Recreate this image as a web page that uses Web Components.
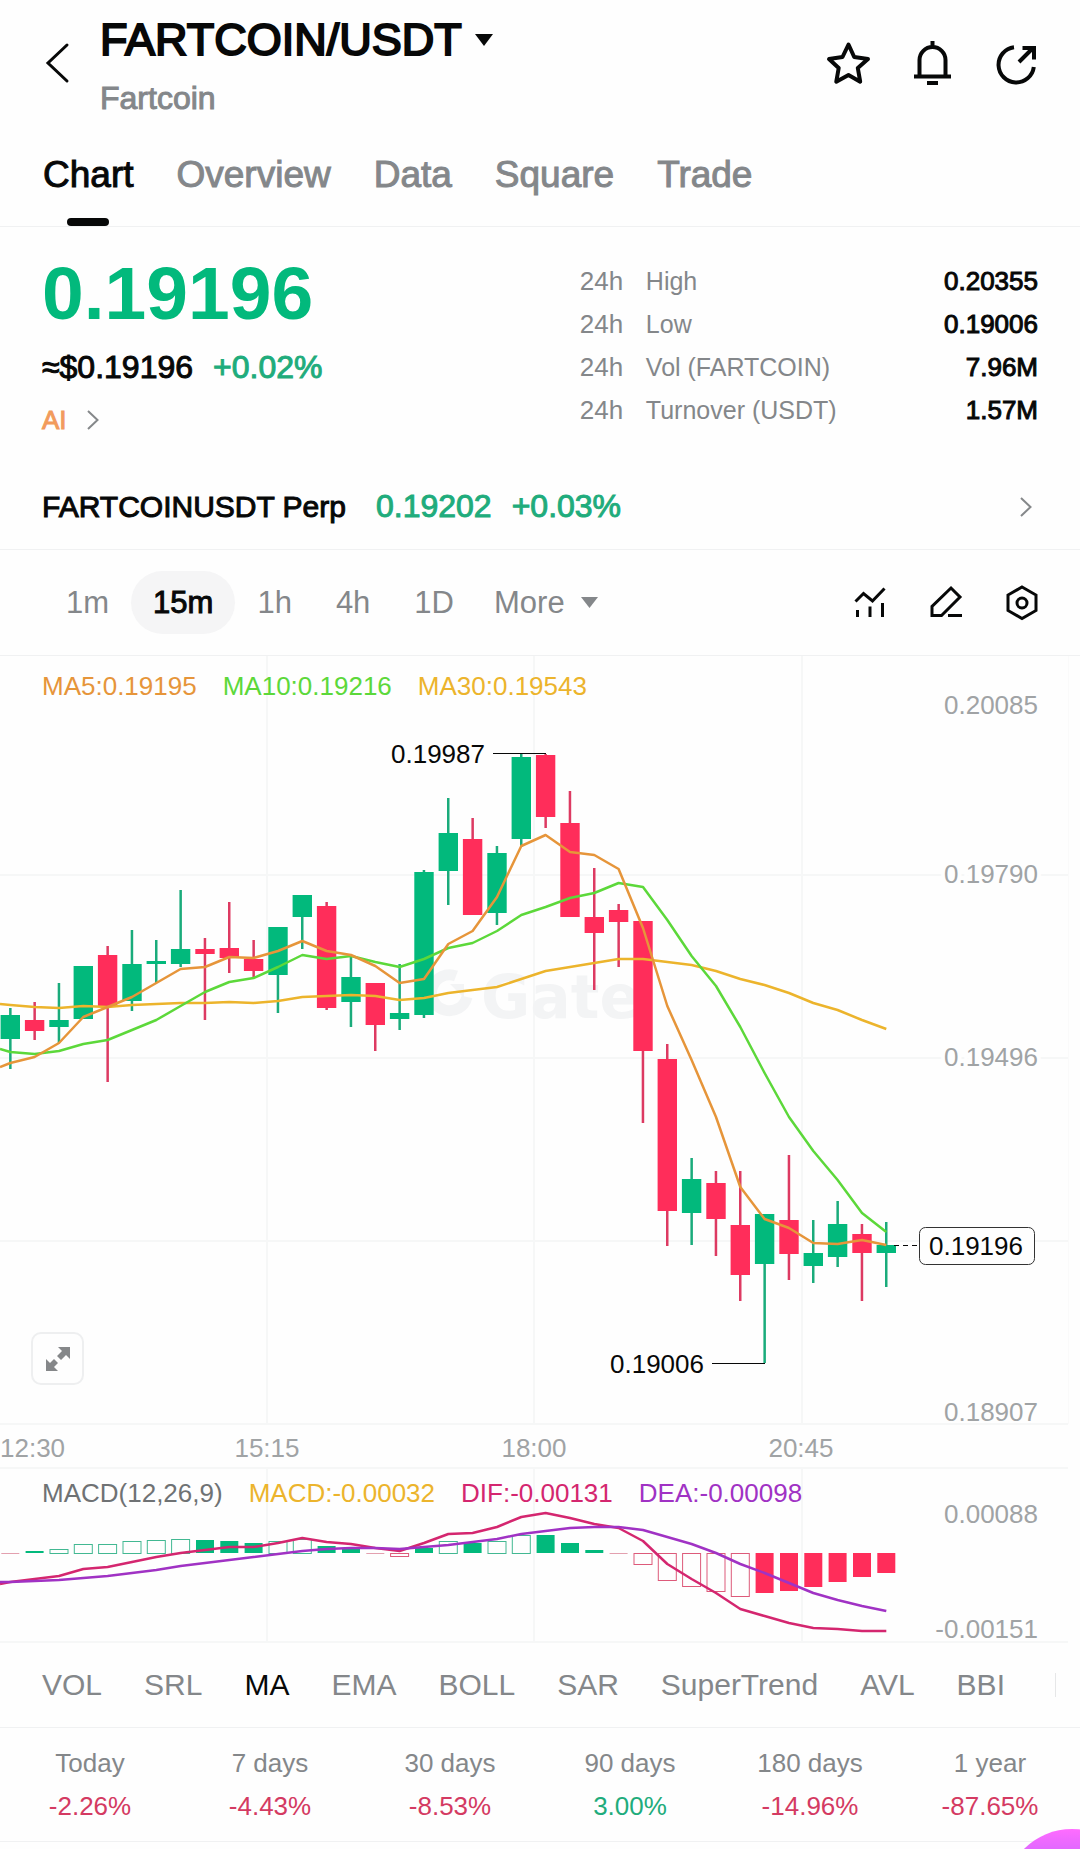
<!DOCTYPE html>
<html lang="en">
<head>
<meta charset="utf-8">
<meta name="viewport" content="width=device-width, initial-scale=1">
<title>FARTCOIN/USDT</title>
<style>
  :root {
    --ink: #070808; --muted: #84878a; --faint: #a0a3a5; --line: #f0f1f2;
    --up: #02b97c; --up-text: #1fac7c; --down: #ff2d5a; --down-text: #d43a62;
    --ma5: #e6953a; --ma10: #5cd83a; --ma30: #ecb42c; --dif: #d4266f; --dea: #a032c4;
  }
  body {
    margin: 0; background: #fefefe; color: var(--ink); overflow-x: hidden;
    font-family: "Liberation Sans", Arial, sans-serif; font-size: 26px;
  }
</style>
</head>
<body>
<market-page>
  <pair-header pair="FARTCOIN/USDT" name="Fartcoin"></pair-header>
  <page-tabs items="Chart,Overview,Data,Square,Trade" active="Chart"></page-tabs>
  <price-summary>
    <script type="application/json">
    {"price":"0.19196","fiat":"≈$0.19196","change":"+0.02%",
     "stats":[["24h","High","0.20355"],["24h","Low","0.19006"],["24h","Vol (FARTCOIN)","7.96M"],["24h","Turnover (USDT)","1.57M"]]}
    </script>
  </price-summary>
  <perp-link price="0.19202" change="+0.03%">FARTCOINUSDT Perp</perp-link>
  <interval-bar items="1m,15m,1h,4h,1D" active="15m"></interval-bar>
  <candle-chart>
    <chart-legend>
      <span style="color:var(--ma5)">MA5:0.19195</span>
      <span style="color:var(--ma10)">MA10:0.19216</span>
      <span style="color:var(--ma30)">MA30:0.19543</span>
    </chart-legend>
  </candle-chart>
  <macd-chart>
    <chart-legend>
      <span style="color:#6f7274">MACD(12,26,9)</span>
      <span style="color:var(--ma30)">MACD:-0.00032</span>
      <span style="color:var(--dif)">DIF:-0.00131</span>
      <span style="color:var(--dea)">DEA:-0.00098</span>
    </chart-legend>
  </macd-chart>
  <indicator-tabs items="VOL,SRL,MA,EMA,BOLL,SAR,SuperTrend,AVL,BBI" active="MA"></indicator-tabs>
  <period-returns>
    <script type="application/json">
    [["Today","-2.26%"],["7 days","-4.43%"],["30 days","-8.53%"],["90 days","3.00%"],["180 days","-14.96%"],["1 year","-87.65%"]]
    </script>
  </period-returns>
  <float-action></float-action>
</market-page>

<script>
(function () {
  const RESET = `
    button { font: inherit; color: inherit; background: none; border: 0; padding: 0; margin: 0; cursor: pointer; }
    a { color: inherit; text-decoration: none; }
    svg { display: block; }
  `;
  const CHEVRON = `<svg width="12" height="20" viewBox="0 0 12 20" fill="none" stroke="#85888a" stroke-width="2" aria-hidden="true"><path d="M1 1l9.500 9L1 19"/></svg>`;

  // candle centres are evenly spaced across the plot
  const cx = i => 10.3 + i * 24.333;
  const points = ys => ys.map((y, i) => (i ? cx(i - 1).toFixed(1) : '0') + ',' + y).join(' ');

  class Base extends HTMLElement {
    connectedCallback() {
      this.attachShadow({ mode: 'open' }).innerHTML = `<style>${RESET}${this.css()}</style>${this.html()}`;
    }
    css() { return ':host { display: block; }'; }
    list() { return this.getAttribute('items').split(','); }
    json() { return JSON.parse(this.querySelector('script').textContent); }
    isActive(t) { return t === this.getAttribute('active'); }
  }

  customElements.define('market-page', class extends Base {
    html() { return `<main><slot></slot></main>`; }
  });

  customElements.define('pair-header', class extends Base {
    css() {
      return `
        :host { display: block; }
        header { display: flex; align-items: center; padding: 8px 40px 0; }
        .back { width: 60px; height: 48px; display: flex; align-items: center; padding-left: 4px; box-sizing: border-box; }
        .names { flex: 1; }
        h1 { margin: 0; font-size: 45px; line-height: 64px; font-weight: 400; -webkit-text-stroke: 2px; }
        h1 button { display: flex; align-items: center; gap: 13px; }
        p { margin: 6px 0 0; font-size: 32px; line-height: 40px; color: var(--muted); -webkit-text-stroke: 1px; }
        .actions { display: flex; gap: 36px; }
      `;
    }
    html() {
      return `
        <header>
          <button class="back" aria-label="Back">
            <svg width="26" height="42" viewBox="0 0 26 42" fill="none" stroke="#070808" stroke-width="3" stroke-linecap="round"><path d="M23 3L4 21l19 18"/></svg>
          </button>
          <div class="names">
            <h1><button>${this.getAttribute('pair')}<svg width="18" height="12" viewBox="0 0 18 12" aria-hidden="true"><path d="M0 0h18L9 12z" fill="#070808"/></svg></button></h1>
            <p>${this.getAttribute('name')}</p>
          </div>
          <div class="actions">
            <button aria-label="Favourite"><svg width="48" height="48" viewBox="0 0 48 48" fill="none" stroke="#070808" stroke-width="4" stroke-linejoin="round"><path d="M24.500 5.500l5.700 12.500 13.800 2-10.200 9 2.400 13.700L24.500 36 12.300 42.700 14.700 29 5 20l13.500-2z"/></svg></button>
            <button aria-label="Alerts"><svg width="48" height="48" viewBox="0 0 48 48" fill="none" stroke="#070808" stroke-width="4"><path d="M24.500 2v5M11.500 37V21a13 13 0 0 1 26 0v16M6 37.500h37M19 44h11"/></svg></button>
            <button aria-label="Share"><svg width="48" height="48" viewBox="0 0 48 48" fill="none" stroke="#070808" stroke-width="4"><path d="M22 8.200A17.700 17.700 0 1 0 41.800 28M27 23L41 9M30.500 9H42v11.500"/></svg></button>
          </div>
        </header>`;
    }
  });

  customElements.define('page-tabs', class extends Base {
    css() {
      return `
        :host { display: block; border-bottom: 1px solid var(--line); }
        nav { display: flex; gap: 43px; padding: 0 43px; }
        a { position: relative; font-size: 37px; line-height: 48px; padding: 33px 0 27px; color: var(--muted); -webkit-text-stroke: 1px; }
        a[aria-current] { color: var(--ink); }
        a[aria-current]::after {
          content: ''; position: absolute; left: 50%; bottom: 0; margin-left: -21px;
          width: 42px; height: 8px; border-radius: 4px; background: var(--ink);
        }
      `;
    }
    html() {
      return `<nav>${this.list().map(t => `<a href="#${t}"${this.isActive(t) ? ' aria-current="page"' : ''}>${t}</a>`).join('')}</nav>`;
    }
  });

  customElements.define('price-summary', class extends Base {
    css() {
      return `
        :host { display: block; }
        section { display: flex; justify-content: space-between; padding: 26px 42px 28px; }
        .price { font-size: 75px; line-height: 80px; font-weight: 700; color: var(--up); }
        .sub { display: flex; gap: 20px; margin-top: 14px; font-size: 32px; line-height: 40px; -webkit-text-stroke: 1px; }
        .sub b { font-weight: 400; color: var(--up-text); }
        .ai { display: flex; align-items: center; gap: 20px; margin-top: 17px; line-height: 32px; color: #f29b5c; -webkit-text-stroke: 1px; }
        table { width: 46%; margin-top: 7px; border-collapse: collapse; align-self: flex-start; }
        th, td { padding: 0; height: 43px; font-weight: 400; text-align: left; color: var(--muted); white-space: nowrap; }
        th { font-size: 25px; }
        td:first-child { width: 66px; }
        td:last-child { text-align: right; color: var(--ink); -webkit-text-stroke: 1px; }
      `;
    }
    html() {
      const d = this.json();
      return `
        <section>
          <div>
            <div class="price">${d.price}</div>
            <div class="sub"><span>${d.fiat}</span><b>${d.change}</b></div>
            <a class="ai" href="#ai">AI ${CHEVRON}</a>
          </div>
          <table>${d.stats.map(([p, k, v]) => `<tr><td>${p}</td><th scope="row">${k}</th><td>${v}</td></tr>`).join('')}</table>
        </section>`;
    }
  });

  customElements.define('perp-link', class extends Base {
    css() {
      return `
        :host { display: block; border-bottom: 1px solid var(--line); }
        a { display: flex; align-items: center; padding: 0 48px 0 42px; font-size: 32px; line-height: 85px; -webkit-text-stroke: 1px; }
        .name { font-size: 30px; margin-right: 30px; }
        .num { color: var(--up-text); margin-right: 20px; }
        svg { margin-left: auto; }
      `;
    }
    html() {
      return `<a href="#perp"><span class="name"><slot></slot></span><span class="num">${this.getAttribute('price')}</span><span class="num">${this.getAttribute('change')}</span>${CHEVRON}</a>`;
    }
  });

  customElements.define('interval-bar', class extends Base {
    css() {
      return `
        :host { display: block; border-bottom: 1px solid var(--line); }
        .bar { display: flex; align-items: center; justify-content: space-between; padding: 21px 38px 21px 44px; }
        .set { display: flex; font-size: 31px; line-height: 63px; color: var(--muted); }
        .set button { padding: 0 22px; border-radius: 32px; }
        .set button[aria-pressed="true"] { background: #f5f5f6; color: var(--ink); -webkit-text-stroke: 1px; }
        .set .more { display: flex; align-items: center; gap: 16px; padding-left: 18px; }
        .tools { display: flex; gap: 36px; }
      `;
    }
    html() {
      return `
        <div class="bar">
          <div class="set">
            ${this.list().map(t => `<button aria-pressed="${this.isActive(t)}">${t}</button>`).join('')}
            <button class="more">More<svg width="17" height="11" viewBox="0 0 17 11" aria-hidden="true"><path d="M0 0h17L8.500 11z" fill="#84878a"/></svg></button>
          </div>
          <div class="tools">
            <button aria-label="Indicators"><svg width="40" height="40" viewBox="0 0 40 40" fill="none" stroke="#070808" stroke-width="3"><path d="M5.500 18.500l8-8 9 7.500L34.500 5.500M7.500 27v7M20 23.500V34M32.500 20v14"/></svg></button>
            <button aria-label="Draw"><svg width="40" height="40" viewBox="0 0 40 40" fill="none" stroke="#070808" stroke-width="3"><path d="M6 32.500v-9L25 5l9 9L15.500 32.500zM22 32.500h14"/></svg></button>
            <button aria-label="Chart settings"><svg width="40" height="40" viewBox="0 0 40 40" fill="none" stroke="#070808" stroke-width="3"><path d="M20 4l14 8v15.500l-14 8-14-8V12z"/><circle cx="20" cy="20" r="5"/></svg></button>
          </div>
        </div>`;
    }
  });

  customElements.define('chart-legend', class extends Base {
    css() { return `:host { display: flex; gap: 26px; line-height: 32px; white-space: nowrap; }`; }
    html() { return `<slot></slot>`; }
  });

  // dir, high, body top, body bottom, low
  const CANDLES = [
    ['u',1008,1015,1039,1069],['d',1002,1020,1031,1040],['u',983,1020,1027,1043],['u',966,966,1019,1019],
    ['d',946,955,1007,1082],['u',930,964,1001,1011],['u',940,961,964,983],['u',890,949,964,967],
    ['d',938,949,954,1020],['d',902,948,958,973],['d',940,959,971,977],['u',927,927,975,1013],
    ['u',895,895,917,949],['d',902,906,1008,1010],['u',957,977,1002,1027],['d',983,983,1025,1051],
    ['u',964,1013,1019,1030],['u',870,872,1015,1018],['u',798,833,871,905],['d',818,839,915,915],
    ['u',846,853,913,925],['u',754,757,839,847],['d',754,755,817,828],['d',791,823,917,917],
    ['d',868,917,933,990],['d',904,910,922,967],['d',921,921,1051,1123],['d',1044,1059,1211,1246],
    ['u',1158,1179,1213,1245],['d',1171,1183,1219,1256],['d',1171,1225,1275,1301],['u',1214,1214,1264,1363],
    ['d',1155,1220,1254,1280],['u',1220,1253,1266,1283],['u',1201,1224,1257,1267],['d',1224,1234,1253,1301],
    ['u',1222,1245,1253,1287]
  ];
  // first value of each series sits on the left edge of the plot
  const MA5 = [1067,1063,1057,1043,1017,1007,997,983,969,967,957,958,951,941,951,955,966,983,979,944,931,897,846,835,852,855,869,928,1006,1060,1117,1187,1219,1228,1243,1244,1240,1245];
  const MA10 = [1049,1052,1054,1051,1044,1040,1030,1020,1006,992,982,978,967,955,959,956,962,967,959,948,943,931,915,907,898,893,883,887,920,956,986,1027,1073,1117,1151,1180,1213,1232];
  const MA30 = [1004,1005,1007,1008,1006,1007,1005,1004,1003,1003,1002,1003,1001,997,996,995,996,1000,998,993,990,987,979,971,967,963,959,959,962,965,971,979,985,993,1003,1010,1020,1029];

  customElements.define('candle-chart', class extends Base {
    css() {
      return `
        :host { display: block; position: relative; }
        ::slotted(chart-legend) { position: absolute; left: 42px; top: 14px; }
        svg.plot { width: 100%; height: auto; }
        text { font-size: 26px; fill: var(--ink); }
        .axis { fill: var(--faint); }
        .halo { stroke: #fefefe; stroke-width: 8px; paint-order: stroke; }
        .end { text-anchor: end; }
        .mid { text-anchor: middle; }
        .grid { stroke: #f6f7f7; stroke-width: 2; fill: none; }
        .mark { font-family: "DejaVu Sans", sans-serif; font-weight: 700; font-size: 60px; fill: #f3f4f5; }
        .u { fill: var(--up); } .d { fill: var(--down); }
        .wick.u { fill: #1aab7b; } .wick.d { fill: #dd3a62; }
        polyline { fill: none; stroke-linejoin: round; }
        .expand {
          position: absolute; left: 31px; bottom: 84px; width: 53px; height: 53px;
          display: grid; place-items: center; background: #fefefe;
          border: 2px solid #eeeff0; border-radius: 10px;
        }
      `;
    }
    html() {
      const candles = CANDLES.map(([c, hi, top, bot, lo], i) => {
        const x = cx(i);
        return `<rect class="wick ${c}" x="${(x - 1.25).toFixed(1)}" y="${hi}" width="2.500" height="${lo - hi}"/><rect class="${c}" x="${(x - 9.7).toFixed(1)}" y="${top}" width="19.400" height="${bot - top}"/>`;
      }).join('');
      return `
        <svg class="plot" viewBox="0 656 1080 813" role="img" aria-label="15 minute candles">
          <path class="grid" d="M0 875h1068M0 1058h1068M0 1241h1068M0 1424h1068M0 1468h1068M267 656v768M534 656v768M802 656v768"/>
          <path d="M1068.500 656v768" stroke="#fafafa"/>
          <g>
            <path d="M456 976a18 18 0 1 0 11 21" fill="none" stroke="#f3f4f5" stroke-width="11"/>
            <path d="M450 984h14v14z" fill="#f3f4f5"/>
            <text class="mark" x="481" y="1018">Gate</text>
          </g>
          ${candles}
          <g stroke-width="2.500">
            <polyline points="${points(MA30)}" stroke="#ecb42c"/>
            <polyline points="${points(MA10)}" stroke="#5cd83a"/>
            <polyline points="${points(MA5)}" stroke="#e6953a"/>
          </g>
          <path d="M493 753.500h53M712 1363.500h53" stroke="#070808" fill="none"/>
          <text x="391" y="763">0.19987</text>
          <text x="610" y="1373">0.19006</text>
          <text class="axis end" x="1038" y="714">0.20085</text>
          <text class="axis halo end" x="1038" y="883">0.19790</text>
          <text class="axis halo end" x="1038" y="1066">0.19496</text>
          <text class="axis end" x="1038" y="1421">0.18907</text>
          <path d="M894 1245.500h26" stroke="#070808" stroke-dasharray="5 4"/>
          <rect x="919.500" y="1227.500" width="115" height="37" rx="6" fill="#fefefe" stroke="#333"/>
          <text class="mid" x="976" y="1255">0.19196</text>
          <text class="axis" x="0" y="1457">12:30</text>
          <text class="axis mid" x="267" y="1457">15:15</text>
          <text class="axis mid" x="534" y="1457">18:00</text>
          <text class="axis mid" x="801" y="1457">20:45</text>
        </svg>
        <slot></slot>
        <button class="expand" aria-label="Full screen">
          <svg width="26" height="26" viewBox="0 0 26 26" fill="#858789"><path d="M13 1h12v12l-4-4-5 5-4-4 5-5zM1 13l4 4 4-4 4 4-4 4 4 4H1z"/></svg>
        </button>`;
    }
  });

  // bar end relative to the zero line; h = hollow, f = filled
  const ZERO = 1553;
  const BARS = [
    ['h',0],['f',-2],['h',-4],['h',-9],['h',-9],['h',-12],['h',-13],['h',-14],['f',-13],['f',-12],['f',-10],['h',-12],
    ['h',-14],['f',-7],['f',-5],['h',0],['h',3],['f',-5],['h',-12],['f',-10],['h',-12],['h',-18],['f',-18],['f',-10],
    ['f',-3],['h',0],['h',11],['h',27],['h',33],['h',38],['h',43],['f',40],['f',38],['f',34],['f',29],['f',24],['f',20]
  ];
  const DIF = [1584,1582,1579,1576,1569,1567,1562,1557,1553,1550,1547,1547,1543,1538,1542,1544,1548,1551,1543,1534,1533,1527,1517,1513,1518,1524,1528,1541,1564,1579,1593,1609,1616,1623,1628,1629,1631,1631];
  const DEA = [1582,1582,1581,1580,1578,1576,1573,1570,1566,1563,1560,1557,1554,1551,1549,1548,1548,1549,1547,1545,1542,1539,1534,1531,1528,1527,1527,1530,1537,1544,1553,1564,1573,1583,1593,1600,1606,1611];

  customElements.define('macd-chart', class extends Base {
    css() {
      return `
        :host { display: block; position: relative; }
        ::slotted(chart-legend) { position: absolute; left: 42px; top: 8px; }
        svg { width: 100%; height: auto; overflow: visible; }
        text { font-size: 26px; fill: var(--faint); text-anchor: end; }
        .grid { stroke: #f6f7f7; stroke-width: 2; fill: none; }
        polyline { fill: none; stroke-linejoin: round; }
      `;
    }
    html() {
      const bars = BARS.map(([kind, v], i) => {
        const color = v < 0 ? '#02b97c' : '#ff2d5a';
        if (v === 0) return `<path d="M${(cx(i) - 9).toFixed(1)} ${ZERO}.5h18" stroke="#e3a0af"/>`;
        const y = v < 0 ? ZERO + v : ZERO;
        if (kind === 'f') return `<rect x="${(cx(i) - 9).toFixed(1)}" y="${y}" width="18" height="${Math.abs(v)}" fill="${color}"/>`;
        return `<rect x="${(cx(i) - 9).toFixed(1)}" y="${y}.5" width="18" height="${Math.abs(v)}" fill="none" stroke="${v < 0 ? '#42b892' : '#dd5a7a'}"/>`;
      }).join('');
      return `
        <svg viewBox="0 1469 1080 174" role="img" aria-label="MACD">
          <path class="grid" d="M0 1642h1068M267 1469v172M534 1469v172M802 1469v172"/>
          ${bars}
          <g stroke-width="2.500">
            <polyline points="${points(DIF)}" stroke="#d4266f"/>
            <polyline points="${points(DEA)}" stroke="#a032c4"/>
          </g>
          <text x="1038" y="1523">0.00088</text>
          <text x="1038" y="1638">-0.00151</text>
        </svg>
        <slot></slot>`;
    }
  });

  customElements.define('indicator-tabs', class extends Base {
    css() {
      return `
        :host { display: block; border-bottom: 1px solid var(--line); }
        nav { display: flex; gap: 42px; padding-left: 42px; margin-right: 24px; font-size: 30px; line-height: 84px; color: var(--muted); }
        button[aria-pressed="true"] { color: var(--ink); }
        /* edge of the next item in the scroller */
        nav::after { content: ''; flex: none; width: 1px; height: 24px; align-self: center; margin-left: auto; background: #e6e7e8; }
      `;
    }
    html() {
      return `<nav>${this.list().map(t => `<button aria-pressed="${this.isActive(t)}">${t}</button>`).join('')}</nav>`;
    }
  });

  customElements.define('period-returns', class extends Base {
    css() {
      return `
        :host { display: block; padding: 14px 0 13px; border-bottom: 1px solid var(--line); }
        table { width: 100%; table-layout: fixed; border-collapse: collapse; }
        th, td { padding: 0; height: 43px; font-weight: 400; text-align: center; }
        th { color: var(--muted); }
        .up { color: var(--up-text); }
        .down { color: var(--down-text); }
      `;
    }
    html() {
      const d = this.json();
      return `
        <table>
          <thead><tr>${d.map(([k]) => `<th scope="col">${k}</th>`).join('')}</tr></thead>
          <tbody><tr>${d.map(([, v]) => `<td class="${v[0] === '-' ? 'down' : 'up'}">${v}</td>`).join('')}</tr></tbody>
        </table>`;
    }
  });

  customElements.define('float-action', class extends Base {
    css() {
      return `
        :host { position: fixed; right: -60px; bottom: -116px; }
        button { display: block; width: 136px; height: 136px; border-radius: 50%; background: linear-gradient(#ff6cff, #b062ff 40%); }
      `;
    }
    html() { return `<button aria-label="Assistant"></button>`; }
  });
})();
</script>
</body>
</html>
